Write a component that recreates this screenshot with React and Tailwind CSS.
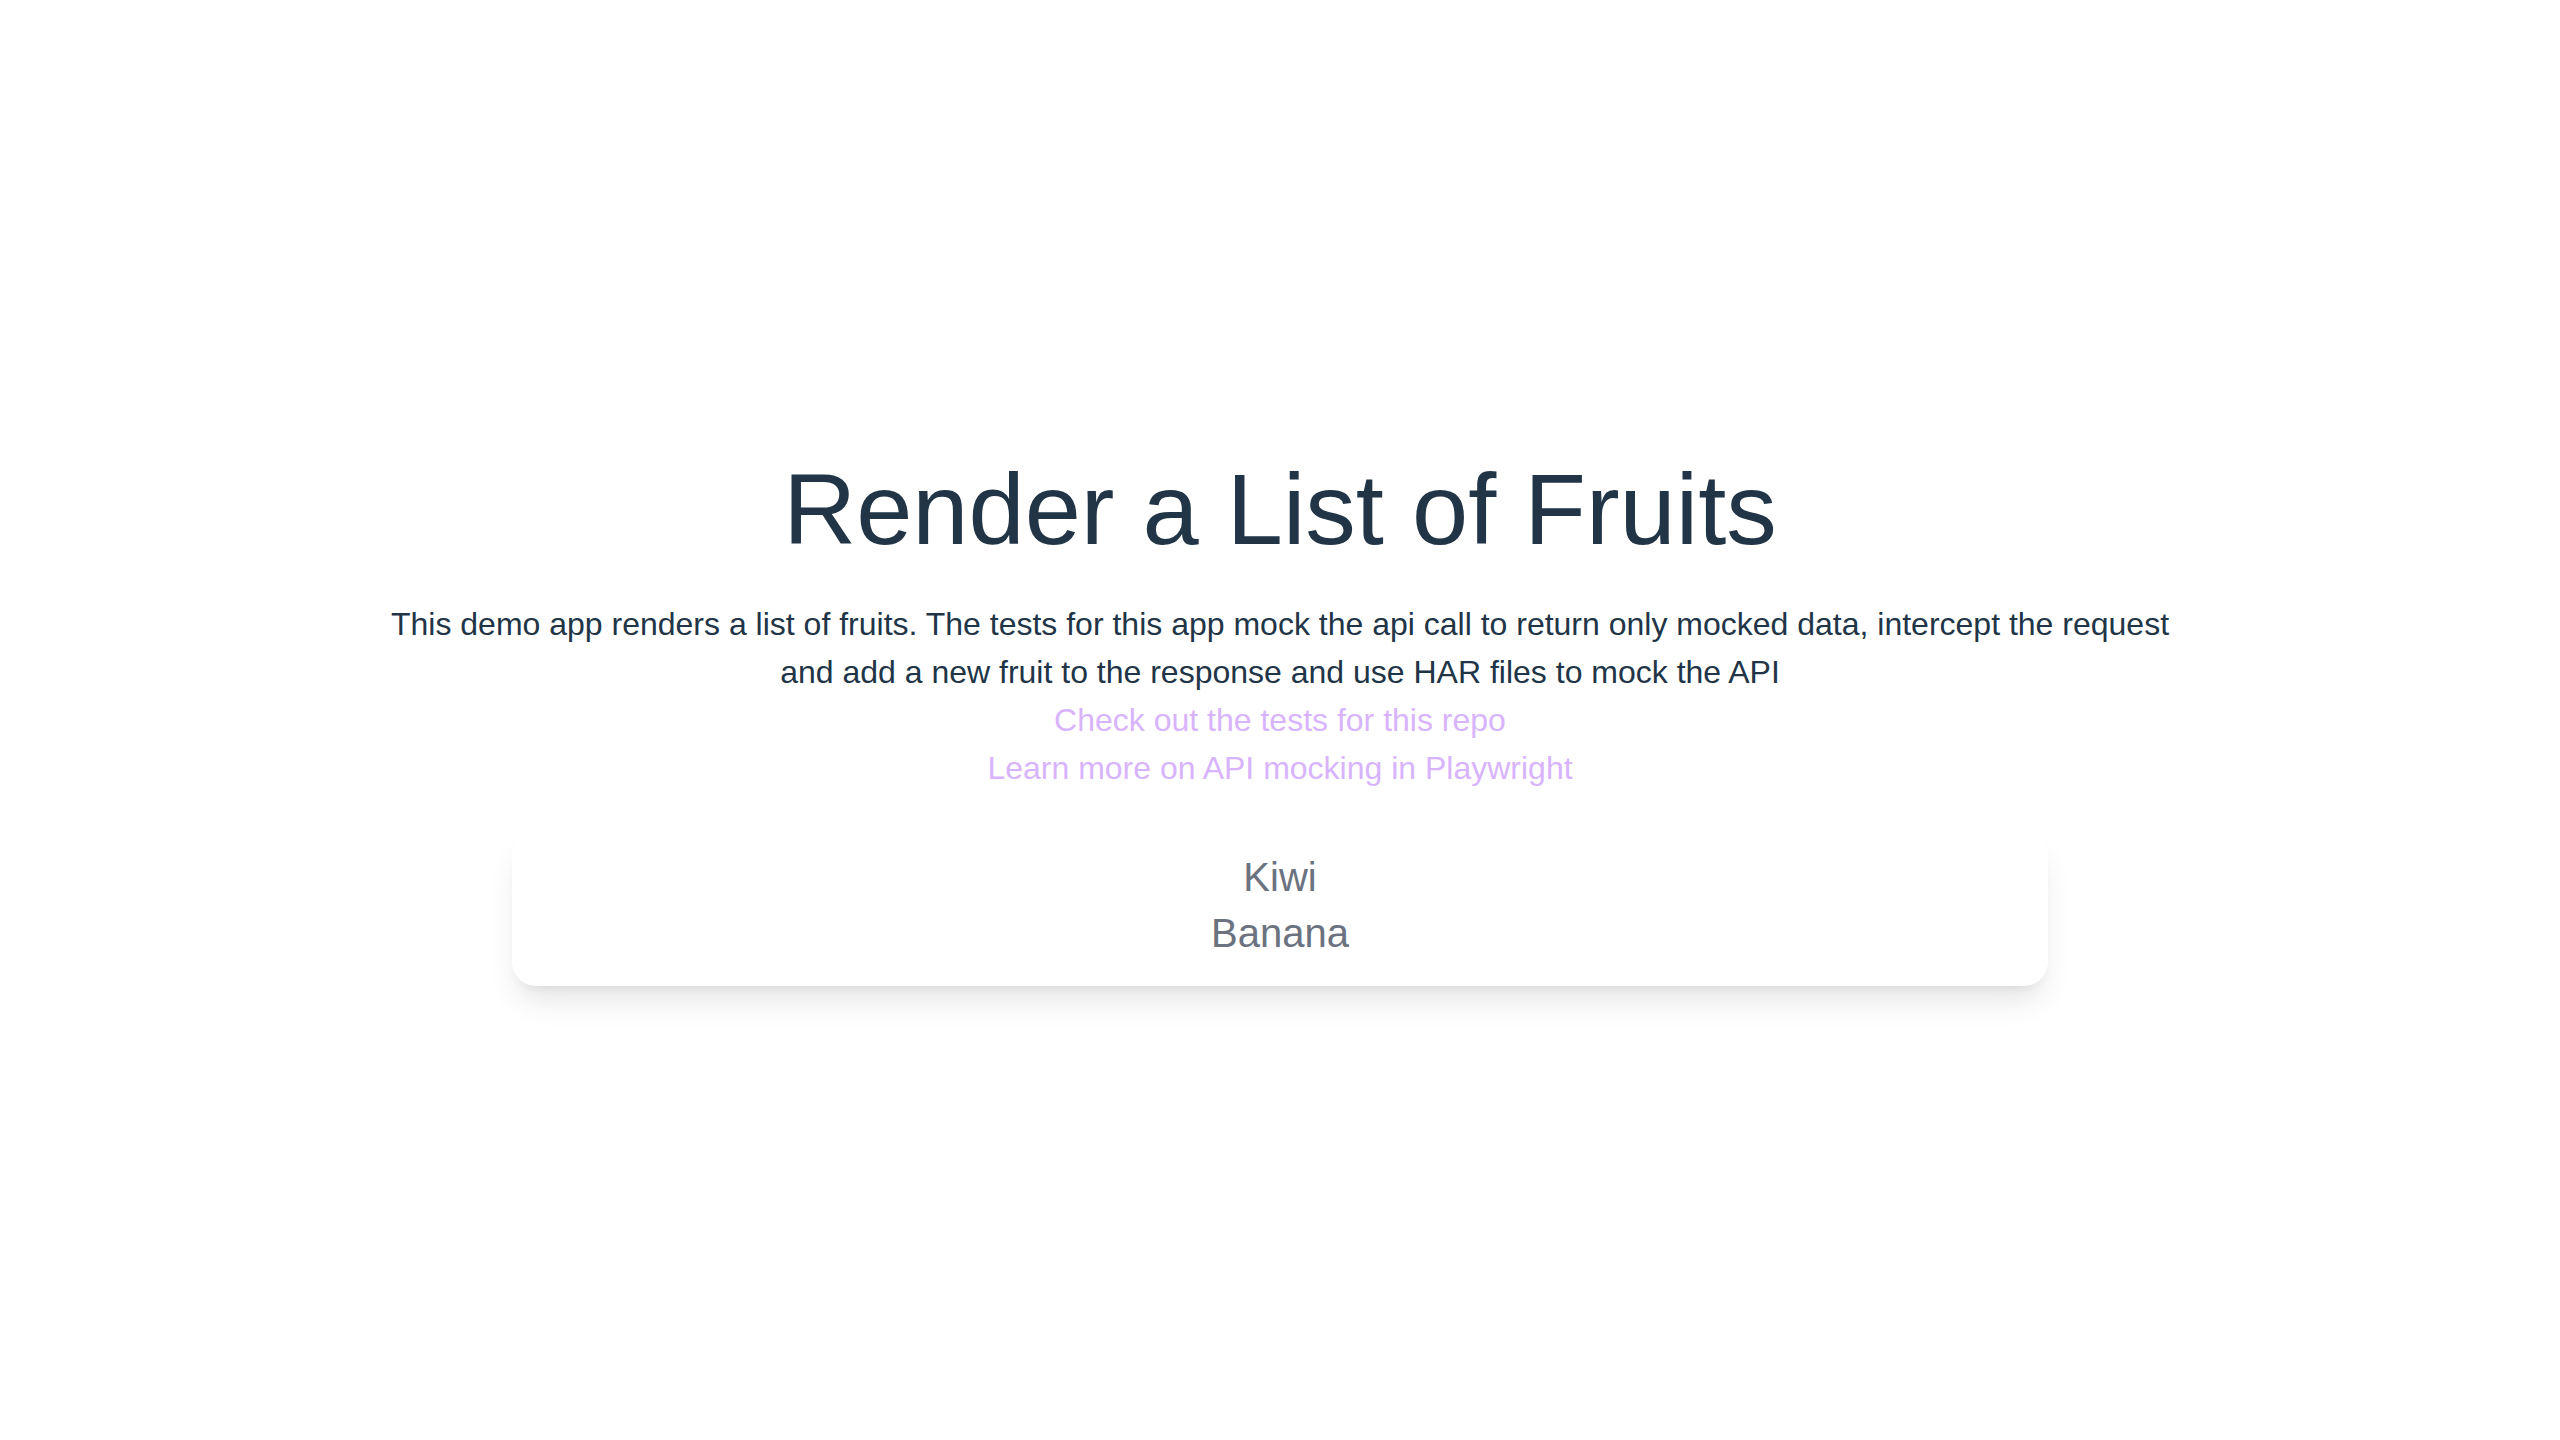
export default function App() {
  return (
    <div
      className="min-h-screen w-full bg-white flex flex-col items-center justify-center text-center"
      style={{ fontFamily: '"Liberation Sans", Arial, Helvetica, sans-serif' }}
    >
      <h1 className="text-[101px] leading-[1.1] text-[#213547] mb-[34px]">Render a List of Fruits</h1>
      <div className="max-w-[1792px] text-[32px] leading-[48px]">
        <p className="text-[#213547]">
          This demo app renders a list of fruits. The tests for this app mock the api call to return only mocked data, intercept the request and add a new fruit to the response and use HAR files to mock the API
        </p>
        <a className="block text-[#d8b4fe]" href="#">Check out the tests for this repo</a>
        <a className="block text-[#d8b4fe]" href="#">Learn more on API mocking in Playwright</a>
      </div>
      <div className="mt-[38px] w-[1536px] rounded-[24px] bg-white pt-[19px] pb-[25px] shadow-[0_20px_30px_-6px_rgba(0,0,0,0.1),0_8px_12px_-8px_rgba(0,0,0,0.1)]">
        <ul className="text-[40px] leading-[56px] text-[#6b7280]">
          <li>Kiwi</li>
          <li>Banana</li>
        </ul>
      </div>
    </div>
  );
}
